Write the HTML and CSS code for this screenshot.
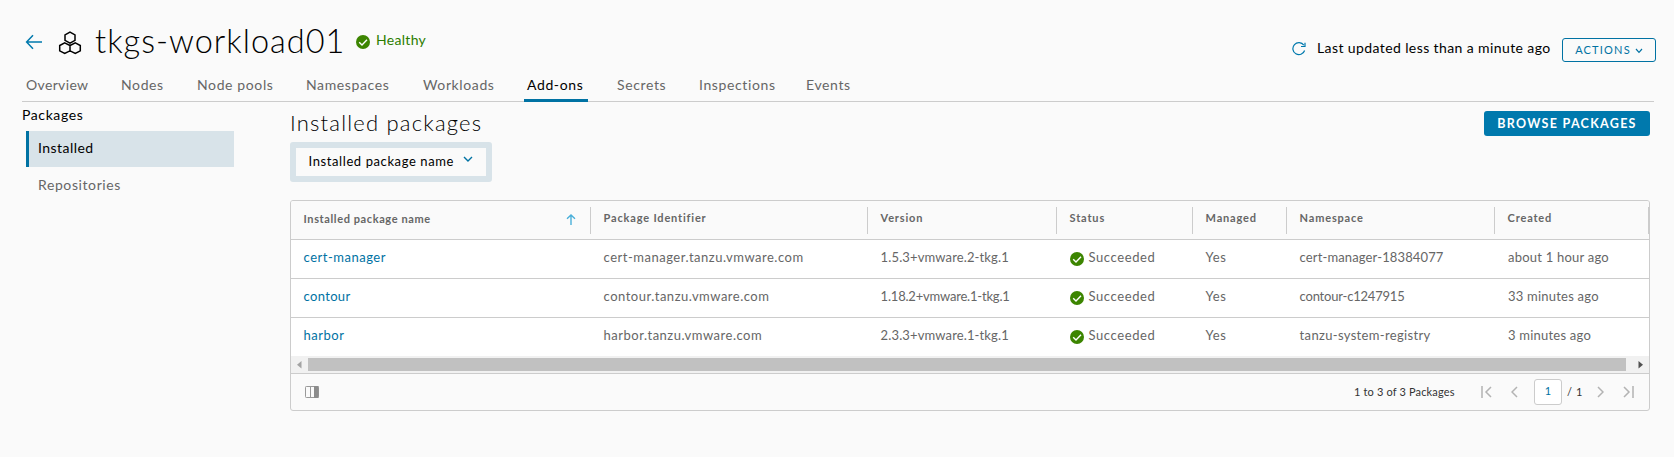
FILE: index.html
```html
<!DOCTYPE html>
<html lang="en">
<head>
<meta charset="utf-8">
<title>tkgs-workload01</title>
<link rel="stylesheet" href="styles.css">
</head>
<body>
<svg class="defs" width="0" height="0">
  <symbol id="ok" viewBox="0 0 14 14"><circle cx="7" cy="7" r="7" fill="#3c8500"/><path d="M3.2 7.2 6 9.9l5-5.2" fill="none" stroke="#fff" stroke-width="1.4"/></symbol>
</svg>
<header class="header">
  <svg class="back" width="18" height="16" viewBox="0 0 18 16"><path d="M8 1.2 1.6 8 8 14.8M1.6 8H17" /></svg>
  <svg class="cluster" width="24" height="24" viewBox="0 0 24 24"><path d="M12 1.2l5 2.700v5.500l-5 2.700-5-2.700V3.900zM6.700 11.900l5.300 2.600v5.400l-5.300 2.600-5-2.600v-5.400zM17.300 11.900l5 2.600v5.400l-5 2.600-5.300-2.600v-5.400z"/></svg>
  <h1 class="title">tkgs-workload01</h1>
  <svg class="ok health-icon"><use href="#ok"/></svg>
  <span class="health">Healthy</span>
  <svg class="refresh" width="14" height="14" viewBox="0 0 14 14"><path d="M12.600 8.500A6 6 0 1 1 11.800 3.200M13 .8v3.700H9"/></svg>
  <span class="updated">Last updated less than a minute ago</span>
  <button class="actions">ACTIONS<svg width="8" height="6" viewBox="0 0 8 6"><path d="M1 1l3 3.300L7 1"/></svg></button>
</header>
<nav class="tabs">
  <a class="wide">Overview</a><a>Nodes</a><a>Node pools</a><a>Namespaces</a><a>Workloads</a><a class="active">Add-ons</a><a>Secrets</a><a>Inspections</a><a>Events</a>
</nav>
<div class="body">
  <aside class="side">
    <div class="side-title">Packages</div>
    <a class="side-item selected">Installed</a>
    <a class="side-item">Repositories</a>
  </aside>
  <main class="main">
    <div class="main-head">
      <h2 class="subtitle">Installed packages</h2>
      <button class="browse">BROWSE PACKAGES</button>
    </div>
    <div class="filter"><span>Installed package name</span><svg width="10" height="7" viewBox="0 0 10 7"><path d="M1 1l4 4 4-4"/></svg></div>
    <section class="grid">
      <div class="row head">
        <div class="sorted">Installed package name<svg width="10" height="11" viewBox="0 0 10 11"><path d="M1 4.800 5 1l4 3.800M5 1v10"/></svg></div>
        <div>Package Identifier</div><div>Version</div><div>Status</div><div>Managed</div><div>Namespace</div><div>Created</div>
      </div>
      <div class="row">
        <a>cert-manager</a><div>cert-manager.tanzu.vmware.com</div><div class="num">1.5.3+vmware.2-tkg.1</div><div class="status"><svg class="ok"><use href="#ok"/></svg>Succeeded</div><div>Yes</div><div class="num">cert-manager-18384077</div><div class="ago">about 1 hour ago</div>
      </div>
      <div class="row">
        <a class="snug">contour</a><div>contour.tanzu.vmware.com</div><div class="num tight">1.18.2+vmware.1-tkg.1</div><div class="status"><svg class="ok"><use href="#ok"/></svg>Succeeded</div><div>Yes</div><div class="num tight">contour-c1247915</div><div class="ago">33 minutes ago</div>
      </div>
      <div class="row">
        <a>harbor</a><div>harbor.tanzu.vmware.com</div><div class="num">2.3.3+vmware.1-tkg.1</div><div class="status"><svg class="ok"><use href="#ok"/></svg>Succeeded</div><div>Yes</div><div class="snug">tanzu-system-registry</div><div class="ago">3 minutes ago</div>
      </div>
      <div class="scroll">
        <svg width="17" height="17" viewBox="0 0 17 17"><path d="M10.500 5v7.500L6 8.750z" fill="#a3a3a3"/></svg>
        <div class="thumb"></div>
        <svg width="23" height="17" viewBox="0 0 23 17"><path d="M12.500 5v7.500L17 8.750z" fill="#505050"/></svg>
      </div>
      <footer class="foot">
        <svg class="cols" width="14" height="12" viewBox="0 0 14 12"><rect x=".5" y=".5" width="13" height="11" rx=".8" fill="#fafafa" stroke="#999"/><path d="M5.500 0v12" stroke="#999"/><path d="M9 0h4.500v12H9z" fill="#8c8c8c"/></svg>
        <span class="count">1 to 3 of 3 Packages</span>
        <svg class="pg first" width="11" height="12" viewBox="0 0 11 12"><path d="M1 0v12M10 1 5 6l5 5"/></svg>
        <svg class="pg prev" width="7" height="12" viewBox="0 0 7 12"><path d="M6 1 1 6l5 5"/></svg>
        <span class="page">1</span>
        <span class="total">/ 1</span>
        <svg class="pg next" width="7" height="12" viewBox="0 0 7 12"><path d="M1 1l5 5-5 5"/></svg>
        <svg class="pg last" width="11" height="12" viewBox="0 0 11 12"><path d="M1 1l5 5-5 5M10 0v12"/></svg>
      </footer>
    </section>
  </main>
</div>
</body>
</html>
```
FILE: styles.css
```css
* { box-sizing: border-box; }
body { margin: 0; height: 457px; overflow: hidden; background: #fafafa; color: #000; font-family: Lato, "Open Sans", sans-serif; font-size: 14px; font-weight: 400; }
h1, h2 { margin: 0; font-weight: 300; }
button { font-family: inherit; padding: 0; }
svg { display: block; flex: none; fill: none; }
.defs { position: absolute; }
.ok { width: 14px; height: 14px; }

.header { display: flex; align-items: flex-start; height: 71px; padding: 31px 18px 0 25px; white-space: nowrap; }
.back { margin-top: 3px; stroke: #0079ad; stroke-width: 1.5; }
.cluster { margin: 0 0 0 15px; stroke: #000; stroke-width: 1.5; }
.title { width: 262px; margin: -10px 0 0 12px; padding-left: 1px; font-size: 32.5px; line-height: 40px; letter-spacing: 1px; }
.health-icon { margin: 4px 6px 0 0; }
.health { margin-top: -1px; line-height: 20px; color: #2b7d00; letter-spacing: .3px; }
.refresh { margin: 11px 11px 0 auto; stroke: #0079ad; stroke-width: 1.2; }
.updated { width: 245px; margin-top: 7px; line-height: 20px; letter-spacing: .4px; }
.actions { display: flex; align-items: center; justify-content: center; gap: 4px; width: 94px; height: 24px; margin-top: 7px; padding-bottom: 1px; border: 1px solid #0072a3; border-radius: 3px; background: none; color: #0072a3; font-size: 11px; letter-spacing: 1.2px; }
.actions svg, .filter svg { stroke: #0072a3; stroke-width: 1.2; }
.actions svg { margin-top: 2px; }

.tabs { display: grid; grid-template-columns: 95px 76px 109px 117px 101px 93px 82px 107px 1fr; height: 31px; margin: 0 20px 0 22px; padding-left: 4px; border-bottom: 1px solid #ccc; color: #666; line-height: 28px; letter-spacing: .62px; }
.tabs .wide { letter-spacing: .35px; }
.tabs .active { width: 64px; height: 31px; padding-left: 3px; border-bottom: 3px solid #0072a3; color: #000; }

.body { display: flex; }
.side { width: 268px; padding: 3px 34px 0 26px; letter-spacing: .6px; }
.side-title { height: 26px; margin-left: -4px; line-height: 20px; }
.side-item { display: block; height: 36px; padding-left: 12px; line-height: 34px; color: #666; }
.side-item.selected { height: 36px; margin-bottom: 1px; padding-left: 9px; border-left: 3px solid #0072a3; background: #d8e3e9; color: #000; letter-spacing: .45px; }
.main { width: 1360px; margin-left: 22px; }
.main-head { display: flex; justify-content: space-between; height: 40px; }
.subtitle { margin-top: 7px; font-size: 22px; line-height: 28px; letter-spacing: 1.2px; }
.browse { width: 166px; height: 25px; margin-top: 9px; border: 0; border-radius: 3px; background: #0079ad; color: #fff; font-size: 12.5px; font-weight: 700; letter-spacing: 1.3px; }
.filter { display: flex; align-items: flex-start; width: 202px; height: 40px; padding: 5px 0 0 12.5px; border: 6px solid #d8e3e9; border-radius: 3px; font-size: 13px; line-height: 17px; letter-spacing: .6px; white-space: nowrap; }
.filter span { width: 154px; }
.filter svg { margin-top: 3px; stroke-width: 1.4; }

.grid { height: 211px; margin-top: 18px; border: 1px solid #ccc; border-radius: 3px; overflow: hidden; }
.row { display: grid; grid-template-columns: 300px 277px 189px 136px 94px 208px 154px; height: 39px; border-bottom: 1px solid #ccc; background: #fff; color: #666; font-size: 13px; line-height: 34px; letter-spacing: .5px; white-space: nowrap; }
.row > * { padding-left: 12.6px; }
.row a { color: #0072a3; }
.row .num { letter-spacing: .13px; }
.row .tight { letter-spacing: -.2px; }
.row .snug { letter-spacing: .33px; }
.row .ago { padding-left: 13px; letter-spacing: .22px; }
.row .status { display: flex; padding-left: 13px; letter-spacing: .6px; }
.status .ok { margin: 12px 4.5px 0 0; }
.row:nth-child(4) { border: 0; }
.head { background: #fafafa; font-size: 11px; font-weight: 700; letter-spacing: .82px; }
.head > div { height: 27px; margin-top: 6px; border-right: 1px solid #ccc; line-height: 22px; }
.head .sorted { display: flex; justify-content: space-between; padding-right: 14px; line-height: 24px; letter-spacing: .6px; }
.sorted svg { margin-top: 7px; stroke: #49afd9; stroke-width: 1.4; }
.scroll { display: flex; align-items: center; height: 17px; margin-top: -1px; background: #f1f1f1; }
.thumb { flex: 1; height: 13px; background: #c1c1c1; }
.foot { display: flex; align-items: center; height: 37px; padding: 0 15px 0 14px; border-top: 1px solid #ccc; color: #333; font-size: 11px; white-space: nowrap; }
.count { width: 127px; margin: 0 0 2px auto; letter-spacing: .15px; }
.pg { stroke: #b3b3b3; stroke-width: 1.5; }
.prev { margin-left: 19px; }
.page { width: 28px; height: 26px; margin: 0 5px 0 16px; border: 1px solid #ccc; border-radius: 3px; background: #fff; color: #0072a3; line-height: 22px; text-align: center; }
.total { width: 30px; margin-bottom: 2px; letter-spacing: .6px; }
.last { margin-left: 19px; }
```
